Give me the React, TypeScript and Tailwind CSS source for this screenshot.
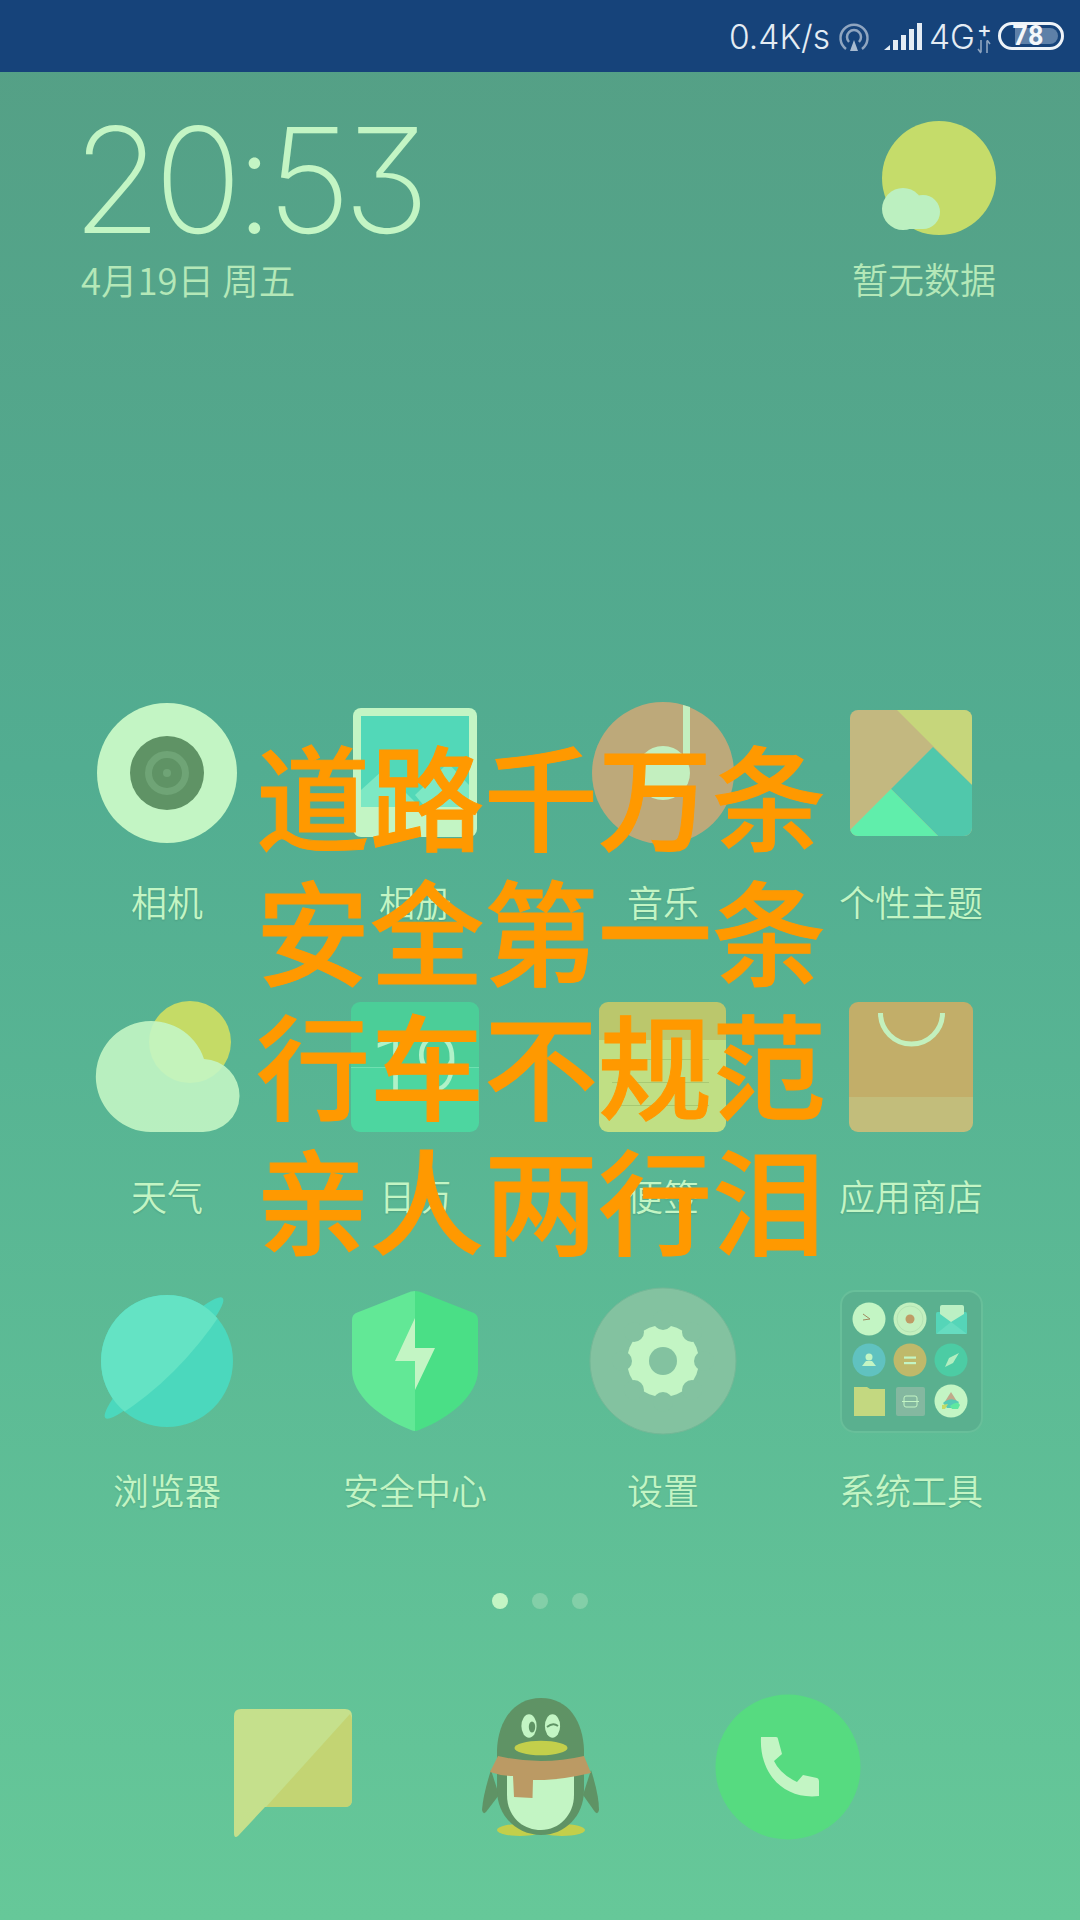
import React from "react";

const CJK = "font-['Noto_Sans_CJK_SC','Noto_Sans',sans-serif]";

function Box({ cx, cy, size = 160, children }: { cx: number; cy: number; size?: number; children: React.ReactNode }) {
  return (
    <svg width={size} height={size} viewBox={`${cx - size / 2} ${cy - size / 2} ${size} ${size}`} className="block shrink-0">
      {children}
    </svg>
  );
}

const Camera = () => (
  <Box cx={167} cy={773}>
    <circle cx={167} cy={773} r={70} fill="#c3f5c4" />
    <circle cx={167} cy={773} r={37} fill="#5f9365" />
    <circle cx={167} cy={773} r={18.5} fill="none" stroke="#6fa476" strokeWidth={7} />
    <circle cx={167} cy={773} r={4} fill="#6fa476" />
  </Box>
);
const Album = () => (
  <Box cx={415} cy={773}>
    <rect x={353} y={708} width={124} height={129} rx={8} fill="#c3f5c4" />
    <rect x={361} y={716} width={108} height={91} fill="#52d8b8" />
    <polygon points="361,790 383,770 420,807 361,807" fill="#7de8c4" />
    <polygon points="415,795 448,763 469,785 469,807 425,807" fill="#7de8c4" />
  </Box>
);
const Music = () => (
  <Box cx={663} cy={773}>
    <circle cx={663} cy={773} r={71} fill="#bda97a" />
    <circle cx={663} cy={773} r={27} fill="#c3efbf" />
    <polygon points="683,705 690,707 690,757 683,757" fill="#c3efbf" />
  </Box>
);
const Theme = () => (
  <Box cx={911} cy={773}>
    <clipPath id="themeClip">
      <rect x={850} y={710} width={122} height={126} rx={8} />
    </clipPath>
    <g clipPath="url(#themeClip)">
      <rect x={850} y={710} width={122} height={126} fill="#c3b880" />
      <polygon points="897,710 972,710 972,785" fill="#c6d67b" />
      <polygon points="933,747 972,785 972,836 938,836 891,789" fill="#50c8ab" />
      <polygon points="891,789 938,836 850,836 850,830" fill="#60eeab" />
    </g>
  </Box>
);
const Weather = () => (
  <Box cx={167} cy={1067}>
    <circle cx={190} cy={1042} r={41} fill="#c5db66" />
    <path
      d="M151 1132 A55.5 55.5 0 1 1 204 1059 A36.5 36.5 0 0 1 202 1132 Z"
      fill="#c3f5c4"
      fillOpacity={0.9}
    />
  </Box>
);
const Calendar = () => (
  <div className="relative w-[160px] h-[160px] shrink-0">
    <svg width={160} height={160} viewBox="335 987 160 160" className="block">
      <clipPath id="calClip">
        <rect x={351} y={1002} width={128} height={130} rx={9} />
      </clipPath>
      <g clipPath="url(#calClip)">
        <rect x={351} y={1002} width={128} height={65} fill="#4bce98" />
        <rect x={351} y={1067} width={128} height={65} fill="#4dd6a0" />
        <rect x={351} y={1067} width={128} height={1} fill="#6fe0b0" />
      </g>
    </svg>
    <span className="absolute inset-0 flex items-center justify-center font-['Roboto',sans-serif] font-light text-[80px] leading-none text-[#b0f2c8] pb-[2px]">
      19
    </span>
  </div>
);
const Notes = () => (
  <Box cx={663} cy={1067}>
    <clipPath id="noteClip">
      <rect x={599} y={1002} width={127} height={130} rx={9} />
    </clipPath>
    <g clipPath="url(#noteClip)">
      <rect x={599} y={1002} width={127} height={38} fill="#bbc76c" />
      <rect x={599} y={1040} width={127} height={92} fill="#c0df84" />
    </g>
    <rect x={612} y={1059} width={97} height={1} fill="#a8c972" />
    <rect x={612} y={1082} width={97} height={1} fill="#a8c972" />
    <rect x={612} y={1105} width={97} height={1} fill="#a8c972" />
  </Box>
);
const Shop = () => (
  <Box cx={911} cy={1067}>
    <clipPath id="shopClip">
      <rect x={849} y={1002} width={124} height={130} rx={9} />
    </clipPath>
    <g clipPath="url(#shopClip)">
      <rect x={849} y={1002} width={124} height={95} fill="#c2ae69" />
      <rect x={849} y={1097} width={124} height={35} fill="#c2bd7b" />
    </g>
    <path d="M880.5 1013 A31 31 0 0 0 942.5 1013" fill="none" stroke="#c3f0bd" strokeWidth={5} />
  </Box>
);
const Browser = () => (
  <Box cx={167} cy={1361}>
    <ellipse cx={164} cy={1358} rx={84} ry={13} transform="rotate(-45.7 164 1358)" fill="#4bd8bd" />
    <clipPath id="planetClip">
      <circle cx={167} cy={1361} r={66} />
    </clipPath>
    <circle cx={167} cy={1361} r={66} fill="#4bd8bd" />
    <path d="M222 1312 Q178 1378 118 1416 L60 1416 L60 1280 L222 1280 Z" fill="#64e3c4" clipPath="url(#planetClip)" />
  </Box>
);
const Shield = () => (
  <Box cx={415} cy={1361}>
    <path d="M415 1291 Q411 1291 407 1293 L356 1313 Q352 1315 352 1320 L352 1370 C352 1395 380 1418 411 1430 Q413 1431 415 1431 Z" fill="#62e896" />
    <path d="M415 1291 Q419 1291 423 1293 L474 1313 Q478 1315 478 1320 L478 1370 C478 1395 450 1418 419 1430 Q417 1431 415 1431 Z" fill="#4adf86" />
    <polygon points="415,1318 395,1361 415,1361 415,1390 435,1348 415,1348" fill="#c3f5c4" />
  </Box>
);
const Settings = () => {
  const notches = [0, 45, 90, 135, 180, 225, 270, 315].map((a) => {
    const r = (a * Math.PI) / 180;
    return [663 + 41 * Math.cos(r), 1361 + 41 * Math.sin(r)];
  });
  return (
    <Box cx={663} cy={1361}>
      <circle cx={663} cy={1361} r={73} fill="#83c2a0" stroke="#74b897" strokeWidth={1} />
      <circle cx={663} cy={1361} r={36} fill="#c3f5c4" />
      {notches.map(([x, y], i) => (
        <circle key={i} cx={x} cy={y} r={10} fill="#83c2a0" />
      ))}
      <circle cx={663} cy={1361} r={14} fill="#83c2a0" />
    </Box>
  );
};
const Tools = () => (
  <Box cx={911} cy={1361}>
    <rect x={841} y={1291} width={141} height={141} rx={14} fill="#5ab08f" stroke="#68bf9a" strokeWidth={2} />
    <circle cx={869} cy={1319} r={16.5} fill="#c3f5c4" />
    <path d="M863 1314 L870 1319 L863 1320" fill="none" stroke="#a08a60" strokeWidth={1} />
    <circle cx={910} cy={1319} r={16.5} fill="#c3f0bf" />
    <circle cx={910} cy={1319} r={13} fill="none" stroke="#aedcae" strokeWidth={0.7} />
    <circle cx={910} cy={1319} r={4.5} fill="#bf9c66" />
    <rect x={936} y={1312} width={31} height={22} rx={1.5} fill="#55d5b8" />
    <polygon points="936,1334 951,1322 967,1334" fill="#66dcc0" />
    <path d="M940 1307 Q940 1305 942 1305 L962 1305 Q964 1305 964 1307 L964 1314 L951 1322 L940 1314 Z" fill="#bcf0c4" />
    <circle cx={869} cy={1360} r={16.5} fill="#60c2c0" />
    <circle cx={869} cy={1357} r={3.5} fill="#c3f5c4" />
    <path d="M862 1366 L866 1361 L872 1361 L876 1366 Z" fill="#c3f5c4" />
    <circle cx={910} cy={1360} r={16.5} fill="#bfb96a" />
    <rect x={904} y={1356.5} width={12} height={2.2} fill="#c3f5c4" />
    <rect x={904} y={1362} width={12} height={2.2} fill="#c3f5c4" />
    <circle cx={951} cy={1360} r={16.5} fill="#4ccca4" />
    <polygon points="959,1353 953,1363 945,1367 949,1358" fill="#b2eec0" />
    <path d="M854 1387 L867 1387 L870 1389 L885 1389 L885 1416 L854 1416 Z" fill="#c3d880" />
    <rect x={896} y={1387} width={29} height={29} rx={2} fill="#84b8a0" />
    <rect x={904} y={1396} width={13} height={11} rx={2} fill="none" stroke="#c3f5c4" strokeWidth={1} />
    <rect x={902} y={1401} width={17} height={1} fill="#c3f5c4" />
    <circle cx={951} cy={1401} r={16.5} fill="#c3f5c4" />
    <polygon points="951,1392 958,1403 944,1403" fill="#c0a98a" />
    <path d="M943 1403 Q951 1396 959 1402 L955 1408 L947 1408 Z" fill="#55cbb5" />
    <path d="M950 1406 Q958 1400 960 1405 L958 1409 L952 1409 Z" fill="#5fe8a0" />
    <polygon points="942,1405 948,1404 945,1409 942,1409" fill="#c5db66" />
  </Box>
);
const Message = () => (
  <Box cx={294} cy={1773} size={140}>
    <path d="M241 1709 L345 1709 Q352 1709 352 1716 L352 1799 Q352 1807 345 1807 L265 1807 L238 1836 Q234 1839 234 1833 L234 1716 Q234 1709 241 1709 Z" fill="#c5e08c" />
    <path d="M350 1714 Q352 1717 352 1720 L352 1799 Q352 1807 345 1807 L266 1807 Z" fill="#c3d473" />
  </Box>
);
const QQ = () => (
  <Box cx={540} cy={1773} size={160}>
    <ellipse cx={519} cy={1830} rx={23} ry={6} fill="#c3cf4b" />
    <ellipse cx={561} cy={1830} rx={23} ry={6} fill="#c3cf4b" />
    <path d="M490 1770 Q482 1795 481 1810 Q482 1815 485 1812 L498 1795 Z" fill="#5f9365" />
    <path d="M590 1770 Q598 1795 598 1810 Q597 1815 594 1812 L582 1795 Z" fill="#5f9365" />
    <path d="M540 1698 C512 1698 497 1722 496 1750 L496 1790 C496 1816 516 1835 540 1835 C564 1835 583 1816 583 1790 L583 1750 C582 1722 568 1698 540 1698 Z" fill="#5f9365" />
    <path d="M506 1775 L573 1775 L573 1795 C573 1815 558 1830 540 1830 C520 1830 506 1815 506 1795 Z" fill="#c3f5c4" />
    <path d="M497 1756 Q540 1766 583 1756 L590 1773 Q555 1781 532 1780 L531.5 1798 L513 1797 L512 1776 Q500 1776 489 1772 Z" fill="#bb9a64" />
    <ellipse cx={528} cy={1726} rx={7.6} ry={11.7} fill="#c3f5c4" />
    <ellipse cx={551.5} cy={1726} rx={7.6} ry={11.7} fill="#c3f5c4" />
    <ellipse cx={531} cy={1727} rx={3.2} ry={5.5} fill="#5f9365" />
    <path d="M546 1727 Q552 1722 557 1726" fill="none" stroke="#5f9365" strokeWidth={1.8} />
    <ellipse cx={540} cy={1748} rx={26.5} ry={7.2} fill="#c3cf4b" />
  </Box>
);
const Phone = () => (
  <Box cx={788} cy={1773} size={160}>
    <circle cx={788} cy={1767} r={72.5} fill="#56db80" />
    <path d="M761 1737 L776 1737 Q778 1737 778 1739 L782 1754 L774 1761 Q780 1774 797 1782 L803 1775 L817 1778 Q819 1779 819 1781 L819 1796 C785 1800 759 1775 761 1737 Z" fill="#c3f5c4" />
  </Box>
);

const rows: { icon: React.ReactNode; label: string }[] = [
  { icon: <Camera />, label: "相机" },
  { icon: <Album />, label: "相册" },
  { icon: <Music />, label: "音乐" },
  { icon: <Theme />, label: "个性主题" },
  { icon: <Weather />, label: "天气" },
  { icon: <Calendar />, label: "日历" },
  { icon: <Notes />, label: "便签" },
  { icon: <Shop />, label: "应用商店" },
  { icon: <Browser />, label: "浏览器" },
  { icon: <Shield />, label: "安全中心" },
  { icon: <Settings />, label: "设置" },
  { icon: <Tools />, label: "系统工具" },
];

export default function App() {
  return (
    <div className="relative w-[1080px] h-[1920px] overflow-hidden flex flex-col bg-[linear-gradient(180deg,#559f85_0%,#52ad91_40%,#66c899_100%)]">
      <div className="h-[72px] shrink-0 bg-[#16437a] flex items-center justify-end pr-[16px] font-['Inter',sans-serif] font-[350] text-[#e4ecf4]">
        <span className="text-[33.5px] leading-none mt-[3px]">0.4K/s</span>
        <svg width={32} height={32} viewBox="0 0 32 32" className="ml-[8px] mt-[2px]">
          <path d="M8 28 A13.5 13.5 0 1 1 24 28" fill="none" stroke="#8fa5c0" strokeWidth={2.5} />
          <path d="M11 21 A7 7 0 1 1 21 21" fill="none" stroke="#8fa5c0" strokeWidth={2.5} />
          <polygon points="16,19 20,30 12,30" fill="#a8bbd0" />
        </svg>
        <svg width={39} height={30} viewBox="0 0 39 30" className="ml-[14px]">
          <polygon points="0,29 6,24 6,29" fill="#e4ecf4" />
          <rect x={9} y={19} width={5} height={10} fill="#e4ecf4" />
          <rect x={17} y={14} width={5} height={15} fill="#e4ecf4" />
          <rect x={25} y={8} width={5} height={21} fill="#e4ecf4" />
          <rect x={33} y={2} width={5} height={27} fill="#e4ecf4" />
        </svg>
        <span className="text-[33.5px] leading-none ml-[6px] mt-[3px]">4G</span>
        <div className="relative w-[16px] h-[36px] ml-[1px]">
          <span className="absolute left-[1px] top-0 text-[22px] leading-[22px] font-medium">+</span>
          <svg width={14} height={14} viewBox="0 0 14 14" className="absolute left-[1px] top-[22px]">
            <path d="M4 0 V12 M1 9 L4 13 M10 13 V1 M13 4 L10 0" fill="none" stroke="#8fa5c0" strokeWidth={1.6} />
          </svg>
        </div>
        <div className="relative w-[66px] h-[28px] ml-[6px] rounded-full border-[3px] border-[#eef3f8]">
          <div className="absolute left-[14px] top-[3px] bottom-[3px] right-[3px] bg-[#5e80a8] rounded-r-full" />
          <span className="absolute inset-0 flex items-center justify-center pr-[6px] font-['Roboto',sans-serif] text-[27px] font-bold leading-none text-[#f4f7fa]">
            78
          </span>
        </div>
      </div>

      <div className="flex justify-between pl-[72px] pr-[84px] h-[621px] shrink-0 items-start">
        <div className="flex flex-col">
          <span className="font-['Inter',sans-serif] font-[250] text-[146px] leading-[180px] mt-[18px] tracking-[-8px] text-[#c3f5c4] [font-feature-settings:'cv09'] [font-variant-numeric:proportional-nums]">
            20:53
          </span>
          <span className={`${CJK} font-[350] text-[36.5px] leading-[48px] mt-[-14px] ml-[9px] text-[#b4e8b8]`}>4月19日 周五</span>
        </div>
        <div className="flex flex-col items-end">
          <svg width={120} height={120} viewBox="880 119 120 120" className="block mt-[47px] mr-[-4px]">
            <circle cx={939} cy={178} r={57} fill="#c5dc6a" />
            <circle cx={903} cy={209} r={21} fill="#bcf0c0" />
            <circle cx={923} cy={212} r={17} fill="#bcf0c0" />
            <rect x={903} y={205} width={20} height={24} fill="#bcf0c0" />
          </svg>
          <span className={`${CJK} font-[350] text-[36px] leading-[48px] mt-[15px] text-[#b4e8b8]`}>暂无数据</span>
        </div>
      </div>

      <div className="grid grid-cols-4 pl-[43px] pr-[45px] shrink-0">
        {rows.map((r) => (
          <div key={r.label} className="flex flex-col items-center h-[294px]">
            {r.icon}
            <span className={`${CJK} font-[350] text-[36px] leading-[48px] mt-[24px] text-[#c3f5c4] [text-shadow:0_1px_2px_rgba(0,0,0,0.12)]`}>
              {r.label}
            </span>
          </div>
        ))}
      </div>

      <div className="flex justify-center items-center gap-[24px] mt-[18px] h-[16px] shrink-0">
        <div className="w-[16px] h-[16px] rounded-full bg-[#c3f5c4]" />
        <div className="w-[16px] h-[16px] rounded-full bg-[#83cfa8]" />
        <div className="w-[16px] h-[16px] rounded-full bg-[#83cfa8]" />
      </div>

      <div className="flex justify-center items-center mt-[84px] h-[160px] shrink-0 pl-[12px]">
        <Message />
        <div className="w-[97px]" />
        <QQ />
        <div className="w-[87px]" />
        <Phone />
      </div>

      <div className={`absolute left-0 top-[726px] w-[1082px] text-center ${CJK} font-medium text-[114px] leading-[134.7px] text-[#ff9900] [-webkit-text-stroke:1px_#ff9900]`}>
        <div>道路千万条</div>
        <div>安全第一条</div>
        <div>行车不规范</div>
        <div>亲人两行泪</div>
      </div>
    </div>
  );
}
